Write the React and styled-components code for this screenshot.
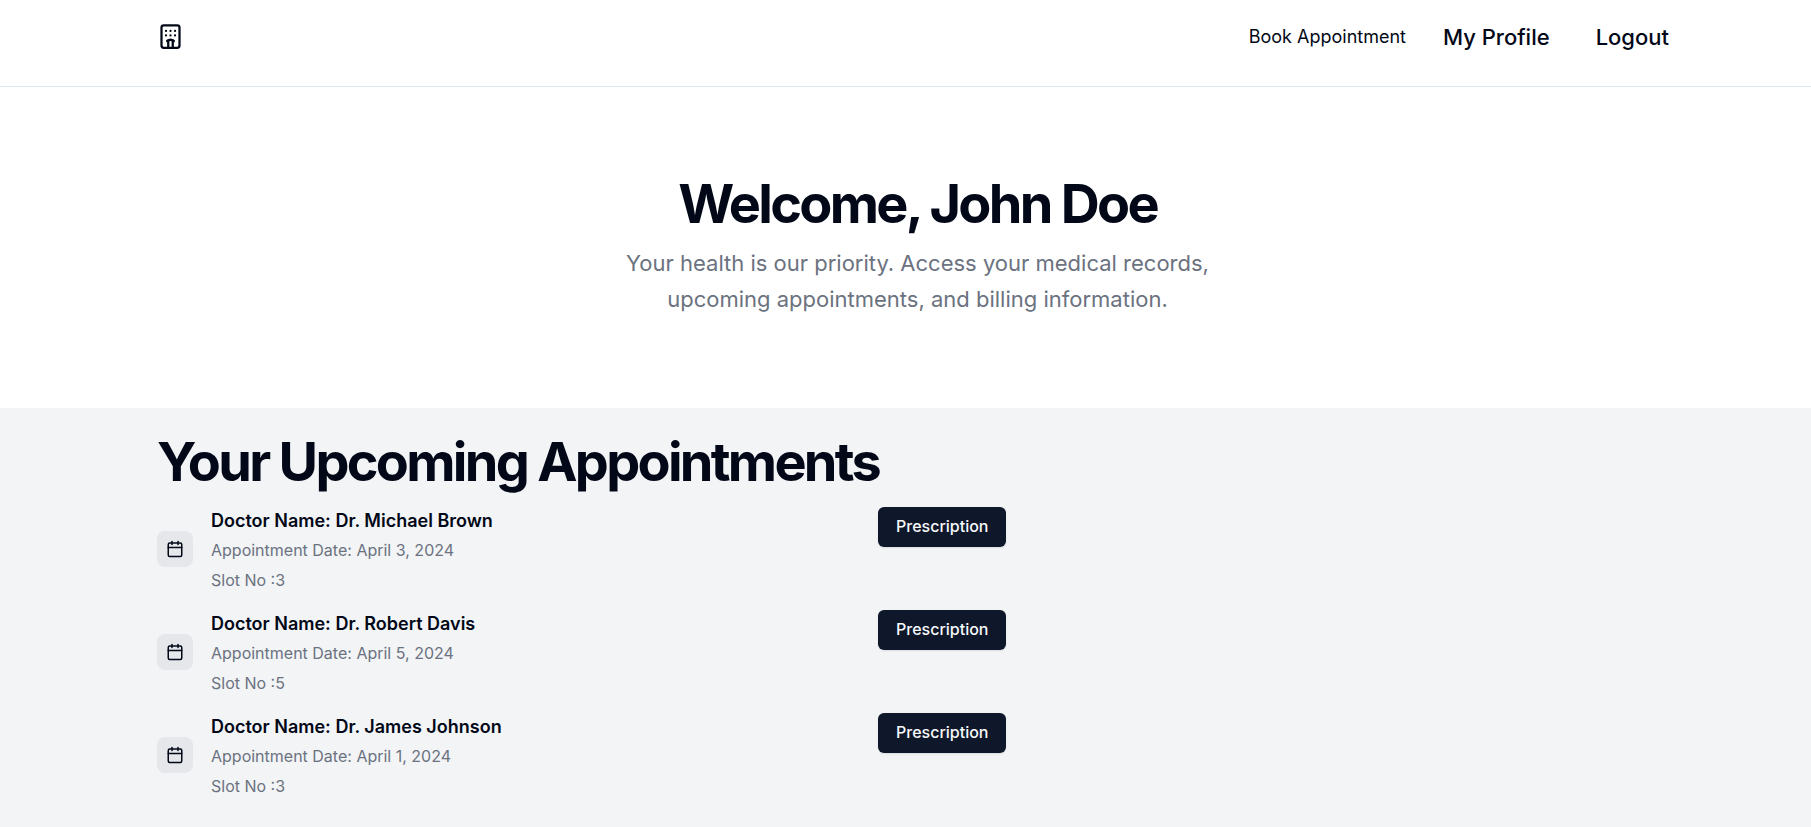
import React from "react";
import styled, { createGlobalStyle } from "styled-components";
import { Calendar, Hotel } from "lucide-react";

const GlobalStyle = createGlobalStyle`
  *, *::before, *::after { box-sizing: border-box; }
  body {
    margin: 0;
    background: #ffffff;
    color: #020817;
    font-family: Inter, "Liberation Sans", sans-serif;
    font-size: 16px;
    line-height: 24px;
  }
  h1, h2, h3, p, ul { margin: 0; padding: 0; }
`;

const Page = styled.div`
  display: flex;
  flex-direction: column;
  min-height: 100vh;
`;

const Main = styled.main`
  flex: 1;
  display: flex;
  flex-direction: column;
`;

const Container = styled.div`
  width: 100%;
  max-width: 1561px;
  margin: 0 auto;
  padding: 0 8px 0 32px;
`;

const Header = styled.header`
  border-bottom: 1px solid #e2e8f0;
`;

const HeaderRow = styled(Container)`
  display: flex;
  align-items: flex-start;
  justify-content: space-between;
  padding-top: 14px;
  padding-bottom: 26px;
`;

const HomeLink = styled.a`
  display: flex;
  padding: 9px 0;
  color: inherit;
`;

const Nav = styled.nav`
  display: flex;
  align-items: center;
  gap: 37px;
`;

const NavLink = styled.a`
  color: inherit;
  text-decoration: none;
  font-size: ${(p) => (p.$large ? "22px" : "18px")};
  font-weight: ${(p) => (p.$large ? 500 : 400)};
  line-height: 46px;
`;

const NavButton = styled.button`
  border: 0;
  padding: 0 9px;
  background: none;
  color: inherit;
  font: 500 22px/46px Inter, "Liberation Sans", sans-serif;
  cursor: pointer;
`;

const Hero = styled.section`
  padding: 87px 0 91px;
`;

const HeroContent = styled(Container)`
  display: flex;
  flex-direction: column;
  align-items: center;
  gap: 11px;
  text-align: center;
`;

const Title = styled.h1`
  font-size: 54px;
  line-height: 60px;
  font-weight: 700;
  letter-spacing: -0.05em;
`;

const Lead = styled.p`
  max-width: 640px;
  color: #6b7280;
  font-size: 22px;
  line-height: 36px;
`;

const Appointments = styled.section`
  flex: 1;
  background: #f3f4f6;
  padding: 24px 0;
`;

const List = styled.ul`
  display: grid;
  gap: 19px;
  margin-top: 15px;
  list-style: none;
`;

const Item = styled.li`
  display: grid;
  grid-template-columns: minmax(0, 721px) auto;
  justify-content: start;
  align-items: start;
`;

const Summary = styled.div`
  display: flex;
  align-items: center;
  gap: 18px;
`;

const IconTile = styled.span`
  display: flex;
  padding: 9px;
  border-radius: 8px;
  background: #e5e7eb;
`;

const Stack = styled.div`
  display: flex;
  flex-direction: column;
  gap: ${(p) => p.$gap}px;
`;

const Doctor = styled.h3`
  font-size: 18px;
  line-height: 27px;
  font-weight: 600;
`;

const Detail = styled.p`
  color: #6b7280;
  font-size: 16px;
  line-height: 21px;
`;

const PrimaryButton = styled.button`
  padding: 7px 18px 9px;
  border: 0;
  border-radius: 6px;
  background: #0f172a;
  color: #f8fafc;
  font: 500 16px/24px Inter, "Liberation Sans", sans-serif;
  box-shadow: 0 1px 2px rgba(0, 0, 0, 0.1);
  cursor: pointer;
`;

const appointments = [
  { doctor: "Dr. Michael Brown", date: "April 3, 2024", slot: 3 },
  { doctor: "Dr. Robert Davis", date: "April 5, 2024", slot: 5 },
  { doctor: "Dr. James Johnson", date: "April 1, 2024", slot: 3 },
];

export default function App() {
  return (
    <Page>
      <GlobalStyle />
      <Header>
        <HeaderRow>
          <HomeLink href="#" aria-label="Home">
            <Hotel size={27} aria-hidden="true" />
          </HomeLink>
          <Nav>
            <NavLink href="#book">Book Appointment</NavLink>
            <NavLink href="#profile" $large>My Profile</NavLink>
            <NavButton type="button">Logout</NavButton>
          </Nav>
        </HeaderRow>
      </Header>
      <Main>
        <Hero>
          <HeroContent>
            <Title>Welcome, John Doe</Title>
            <Lead>
              Your health is our priority. Access your medical records, upcoming
              appointments, and billing information.
            </Lead>
          </HeroContent>
        </Hero>
        <Appointments>
          <Container>
            <Title as="h2">Your Upcoming Appointments</Title>
            <List>
              {appointments.map((a) => (
                <Item key={a.doctor}>
                  <Summary>
                    <IconTile>
                      <Calendar size={18} aria-hidden="true" />
                    </IconTile>
                    <Stack $gap={6}>
                      <Doctor>Doctor Name: {a.doctor}</Doctor>
                      <Stack $gap={9}>
                        <Detail>Appointment Date: {a.date}</Detail>
                        <Detail>Slot No :{a.slot}</Detail>
                      </Stack>
                    </Stack>
                  </Summary>
                  <PrimaryButton type="button">Prescription</PrimaryButton>
                </Item>
              ))}
            </List>
          </Container>
        </Appointments>
      </Main>
    </Page>
  );
}
